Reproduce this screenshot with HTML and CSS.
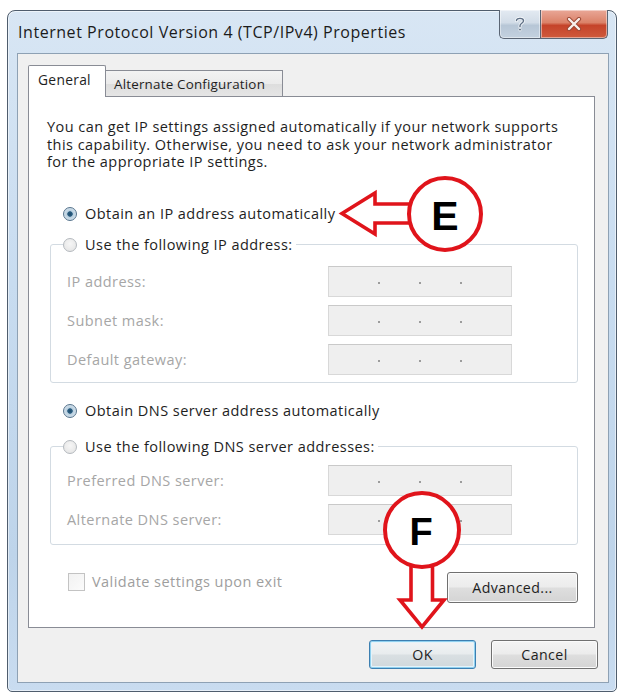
FILE: index.html
```html
<!DOCTYPE html>
<html lang="en">
<head>
<meta charset="utf-8">
<title>Internet Protocol Version 4 (TCP/IPv4) Properties</title>
<link rel="stylesheet" href="styles.css">
</head>
<body>
<div class="window">
  <div class="titlebar">
    <div class="title">Internet Protocol Version 4 (TCP/IPv4) Properties</div>
    <div class="caption-btns">
      <div class="cap help">
        <svg width="12" height="16" viewBox="0 0 12 16"><path d="M2.5 4.5 C2.5 1.6 9.5 1.6 9.5 4.8 C9.5 7.3 6 7.2 6 9.8 V10.8" fill="none" stroke="#f4f7fa" stroke-width="3" stroke-linecap="round"/><path d="M2.5 4.5 C2.5 1.6 9.5 1.6 9.5 4.8 C9.5 7.3 6 7.2 6 9.8 V10.8" fill="none" stroke="#5f7086" stroke-width="1.4" stroke-linecap="round"/><circle cx="6" cy="13.6" r="1.4" fill="#5f7086" stroke="#f4f7fa" stroke-width="0.8"/></svg>
      </div>
      <div class="cap close">
        <svg width="16" height="14" viewBox="0 0 16 14"><path d="M3 2 L13 12 M13 2 L3 12" stroke="#9a4634" stroke-width="4.2" stroke-linecap="round"/><path d="M3 2 L13 12 M13 2 L3 12" stroke="#f8f0ec" stroke-width="2.4" stroke-linecap="round"/></svg>
      </div>
    </div>
  </div>
  <div class="client">
    <div class="tabs">
      <div class="tab active">General</div>
      <div class="tab">Alternate Configuration</div>
    </div>
    <div class="panel">
      <p class="intro">You can get IP settings assigned automatically if your network supports<br>this capability. Otherwise, you need to ask your network administrator<br>for the appropriate IP settings.</p>

      <div class="radio-row first"><span class="radio on"></span>Obtain an IP address automatically</div>
      <fieldset class="group g-ip">
        <legend><span class="radio"></span>Use the following IP address:</legend>
        <div class="field-row"><span class="flabel">IP address:</span><span class="ipbox"><i></i><i></i><i></i></span></div>
        <div class="field-row"><span class="flabel">Subnet mask:</span><span class="ipbox"><i></i><i></i><i></i></span></div>
        <div class="field-row"><span class="flabel">Default gateway:</span><span class="ipbox"><i></i><i></i><i></i></span></div>
      </fieldset>

      <div class="radio-row dns"><span class="radio on"></span>Obtain DNS server address automatically</div>
      <fieldset class="group g-dns">
        <legend><span class="radio"></span>Use the following DNS server addresses:</legend>
        <div class="field-row"><span class="flabel">Preferred DNS server:</span><span class="ipbox"><i></i><i></i><i></i></span></div>
        <div class="field-row"><span class="flabel">Alternate DNS server:</span><span class="ipbox"><i></i><i></i><i></i></span></div>
      </fieldset>

      <div class="bottom-row">
        <div class="check"><span class="box"></span>Validate settings upon exit</div>
        <button class="btn adv">Advanced...</button>
      </div>
    </div>
    <div class="dialog-btns">
      <button class="btn ok">OK</button>
      <button class="btn cancel">Cancel</button>
    </div>
  </div>
</div>

<svg class="annot" width="623" height="695" viewBox="0 0 623 695">
  <path d="M411 204 L375 204 L375 193 L342 213.5 L375 234 L375 223 L411 223" fill="#fff" stroke="#e0141b" stroke-width="3.6" stroke-linejoin="miter"/>
  <circle cx="445" cy="214" r="36" fill="#fff" stroke="#e0141b" stroke-width="4"/>
  <text x="445" y="230" class="mark">E</text>

  <path d="M411 560 L411 600 L400 600 L422 627 L444 600 L432.5 600 L432.5 560" fill="#fff" stroke="#e0141b" stroke-width="3.6" stroke-linejoin="miter"/>
  <circle cx="422" cy="530" r="37" fill="#fff" stroke="#e0141b" stroke-width="4"/>
  <text x="421" y="545" class="mark f">F</text>
</svg>
</body>
</html>
```

FILE: styles.css
```css
* { box-sizing: border-box; }

html, body {
  margin: 0;
  padding: 0;
  background: #ffffff;
}

body {
  position: relative;
  width: 623px;
  height: 695px;
  overflow: hidden;
  font-family: "Open Sans", "Noto Sans", sans-serif;
  font-size: 14.5px;
  letter-spacing: 0.45px;
  color: #1e1e1e;
}

/* ---------- window frame ---------- */
.window {
  margin: 10px 0 0 7px;
  width: 610px;
  height: 682px;
  border: 1px solid #4f5d6d;
  border-radius: 8px 8px 5px 5px;
  background: linear-gradient(180deg, #d8e6f4 0%, #c8dcf0 40%, #bed4ea 80%, #c9dcf0 100%);
  box-shadow: inset 0 0 0 1px rgba(255,255,255,0.55);
  padding: 0 7px 8px 9px;
  display: flex;
  flex-direction: column;
}

.titlebar {
  height: 42px;
  margin: 0 -7px 0 -9px;
  padding-left: 10px;
  display: flex;
  align-items: center;
  justify-content: space-between;
}

.title {
  font-size: 16px;
  color: #1b1b1b;
  letter-spacing: 0.55px;
  margin-top: -1px;
}

.caption-btns {
  align-self: flex-start;
  display: flex;
  margin-top: -1px;
  margin-right: 8px;
}

.cap {
  height: 29px;
  border: 1px solid #5a6574;
  border-top: none;
  display: flex;
  align-items: center;
  justify-content: center;
  box-shadow: inset 0 0 0 1px rgba(255,255,255,0.45);
}

.cap.help {
  width: 41px;
  border-right: none;
  border-radius: 0 0 0 5px;
  background: linear-gradient(180deg, #e3eaf2 0%, #d2dce7 45%, #b7c6d6 55%, #c3d1df 100%);
}

.cap.close {
  width: 68px;
  border-radius: 0 0 5px 0;
  background: linear-gradient(180deg, #e9a797 0%, #db8269 45%, #c5432a 55%, #cf5a3c 100%);
}

/* ---------- client area ---------- */
.client {
  flex: 1;
  border: 1px solid #8ea1b4;
  background: #f0f0f0;
  padding: 11px 13px 0 10px;
  display: flex;
  flex-direction: column;
}

.tabs {
  display: flex;
  align-items: flex-end;
  margin-bottom: -1px;
  position: relative;
  z-index: 1;
}

.tab {
  border: 1px solid #898c95;
  border-bottom: none;
  display: flex;
  align-items: center;
  font-size: 13.8px;
  letter-spacing: 0.3px;
}

.tab.active {
  height: 32px;
  width: 78px;
  background: #ffffff;
  border-radius: 2px 2px 0 0;
  padding: 0 0 4px 9px;
}

.tab:not(.active) {
  height: 26px;
  width: 177px;
  margin-bottom: 1px;
  border-left: none;
  background: linear-gradient(180deg, #f3f3f3 0%, #ebebeb 50%, #dddddd 51%, #e5e5e5 100%);
  padding-left: 8px;
  font-size: 13.4px;
  letter-spacing: 0.2px;
}

.panel {
  height: 532px;
  border: 1px solid #898c95;
  background: #ffffff;
  padding: 21px 16px 0 18px;
  display: flex;
  flex-direction: column;
}

.intro {
  margin: 0;
  line-height: 17.5px;
  white-space: nowrap;
}

/* ---------- radios ---------- */
.radio-row {
  height: 20px;
  display: flex;
  align-items: center;
  margin-left: 16px;
}

.radio-row.first { margin-top: 33px; }
.radio-row.dns { margin-top: 18px; }

.radio {
  width: 14px;
  height: 14px;
  border-radius: 50%;
  border: 1px solid #b4b9be;
  background: radial-gradient(circle at 50% 40%, #f6f6f6 0%, #e2e2e2 100%);
  margin-right: 8px;
  flex: none;
  display: inline-block;
}

.radio.on {
  border-color: #56738c;
  background: radial-gradient(circle, #1f4a6b 0%, #2d6184 28%, #b9cfdf 36%, #e4edf4 100%);
}

/* ---------- group boxes ---------- */
.group {
  margin: 11px 0 0 3px;
  width: 528px;
  border: 1px solid #d3dbe2;
  border-radius: 3px;
  padding: 11px 0 7px 16px;
  min-width: 0;
}

.group legend {
  padding: 0 3px 0 0;
  margin-left: -4px;
  height: 20px;
  line-height: 20px;
  display: flex;
  align-items: center;
}

.g-dns { margin-top: 16px; padding-top: 8px; padding-bottom: 9px; }

.field-row {
  display: flex;
  align-items: center;
  height: 31px;
  margin-bottom: 8px;
}

.field-row:last-child { margin-bottom: 0; }

.flabel {
  width: 261px;
  color: #a6a6a6;
}

.ipbox {
  width: 184px;
  height: 31px;
  background: #efefef;
  border: 1px solid #d8d8d8;
  border-top-color: #c9c9c9;
  display: flex;
  align-items: center;
  justify-content: space-around;
  padding: 4px 30px 0 30px;
}

.ipbox i {
  width: 2px;
  height: 2px;
  background: #9c9c9c;
}

/* ---------- bottom row ---------- */
.bottom-row {
  margin-top: 27px;
  display: flex;
  align-items: flex-start;
  justify-content: space-between;
}

.check {
  display: flex;
  align-items: center;
  height: 18px;
  margin-left: 21px;
  margin-top: 1px;
  color: #9e9e9e;
}

.check .box {
  width: 17px;
  height: 18px;
  border: 1px solid #c3c3c3;
  background: linear-gradient(135deg, #f2f2f2, #fbfbfb);
  margin-right: 7px;
}

/* ---------- buttons ---------- */
.btn {
  font-family: inherit;
  font-size: 14.2px;
  letter-spacing: 0.4px;
  color: #1e1e1e;
  border: 1px solid #707070;
  border-radius: 3px;
  background: linear-gradient(180deg, #f4f4f4 0%, #ececec 48%, #dedede 52%, #d4d4d4 100%);
  box-shadow: inset 0 0 0 1px #fbfbfb;
  padding: 0;
  margin: 0;
}

.btn.adv {
  width: 131px;
  height: 31px;
}

.dialog-btns {
  margin-top: 12px;
  margin-right: -3px;
  display: flex;
  justify-content: flex-end;
  gap: 15px;
}

.dialog-btns .btn {
  width: 107px;
  height: 29px;
}

.btn.ok {
  border-color: #3c7fb1;
  box-shadow: inset 0 0 0 1px #8fd0ef, inset 0 0 0 2px #e4f3fa;
  background: linear-gradient(180deg, #f2f4f5 0%, #e8ecee 48%, #d9dfe2 52%, #d0d8dc 100%);
}

/* ---------- annotations overlay ---------- */
.annot {
  position: absolute;
  left: 0;
  top: 0;
  pointer-events: none;
}

.mark {
  font-family: "Liberation Sans", Arial, sans-serif;
  font-weight: bold;
  font-size: 41px;
  letter-spacing: 0;
  text-anchor: middle;
  fill: #000;
}

.mark.f { font-size: 38px; }
```
